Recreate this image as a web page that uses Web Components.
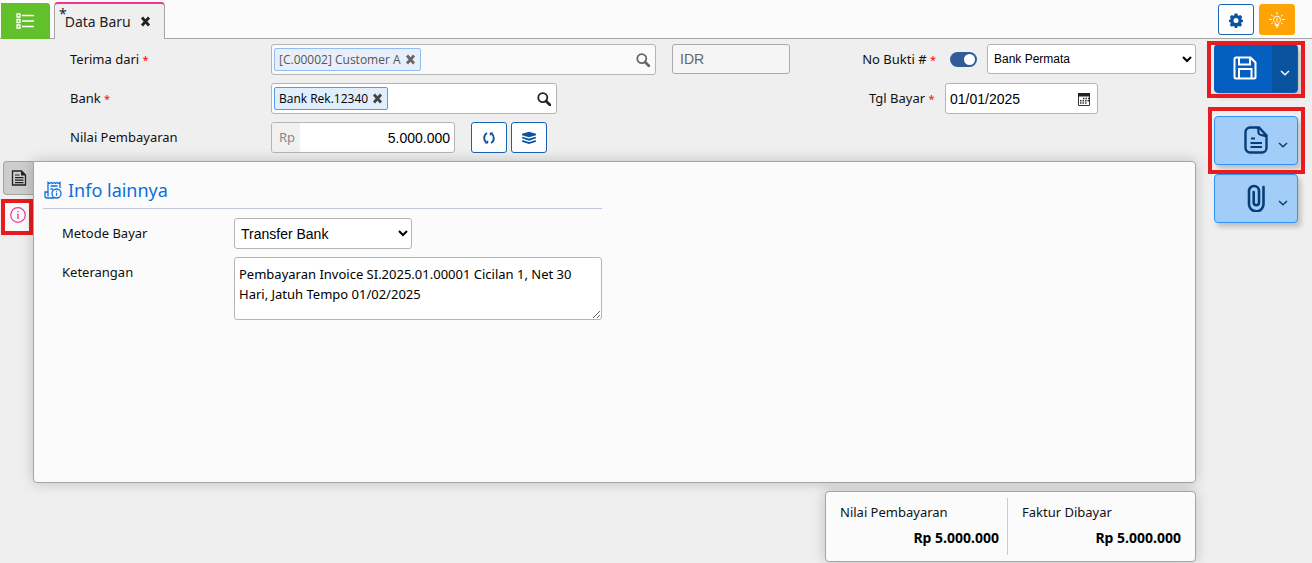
<!DOCTYPE html>
<html lang="id">
<head>
<meta charset="utf-8">
<meta name="viewport" content="width=device-width, initial-scale=1">
<title>Data Baru</title>
<style>
    body {
        margin: 0;
        font: 13px/20px "Noto Sans", "Open Sans", sans-serif;
        color: #111;
        background: #efefef;
    }
</style>
</head>
<body>
<payment-page></payment-page>

<script>
const ICONS = {
    list: ['0 0 18 16', '<path d="M1 1h3v3H1zM1 6.500h3v3H1zM1 12h3v3H1z" fill="none" stroke="currentColor" stroke-width="1.300"/><path d="M6 2.500h12M6 8h12M6 13.500h12" stroke="currentColor" stroke-width="1.700"/>'],
    close: ['0 0 11 11', '<path d="M2 1.500l7 8M9 1.500l-7 8" stroke="currentColor" stroke-width="2.800"/>'],
    search: ['0 0 14 14', '<circle cx="5.800" cy="5.600" r="4.500" fill="none" stroke="currentColor" stroke-width="1.800"/><path d="M9 9l4 4" stroke="currentColor" stroke-width="2.600" stroke-linecap="round"/>'],
    sync: ['0 0 14 14', '<path d="M5 2C1.400 4 1.400 9 4.200 11.300M9 12c3.600-2 3.600-7 .8-9.300" fill="none" stroke="currentColor" stroke-width="1.900"/><path d="M2.500 12.600h3.700V9zM11.500 1.400H7.800v3.700z" fill="currentColor"/>'],
    layers: ['0 0 16 14', '<path d="M8 .8l7 2v1.400L8 6.200 1 4.200V2.800z" fill="currentColor"/><path d="M1.200 6.500L8 8.700l6.800-2.200M1.200 9.800L8 12l6.800-2.200" fill="none" stroke="currentColor" stroke-width="1.800"/>'],
    calendar: ['0 0 14 14', '<path d="M1.500 1.500h11v12h-11z" fill="#fff" stroke="#333"/><path d="M1 1h12v3.500H1z" fill="#222"/><path d="M6 6.500h1.500M8.500 6.500H10M11 6.500h1M3 8.800h1.500M5.500 8.800H7M8 8.800h1.500M10.500 8.800H12M3 11h1.500M5.500 11H7M8 11h1.500" stroke="#333" stroke-width="1.500"/>'],
    gear: ['0 0 16 16', '<path fill="currentColor" fill-rule="evenodd" d="M6.700 1.500h2.600l.4 1.700 1 .5 1.700-.8 1.800 2-.9 1.500.3 1 1.400.5v1.900l-1.500.5-.4 1 .9 1.600-1.800 1.800-1.600-.8-1 .4-.4 1.700H6.700l-.4-1.700-1-.4-1.700.8-1.700-1.800.8-1.600-.4-1L.9 9.800V7.900l1.400-.5.4-1-.8-1.500 1.700-2 1.700.8 1-.5zM8 5.900a2.500 2.500 0 1 0 0 5 2.500 2.500 0 0 0 0-5z"/>'],
    bulb: ['0 0 16 16', '<path d="M6.300 12v-1.200C5 10 4.500 9 4.500 7.700a3.500 3.500 0 0 1 7 0c0 1.300-.5 2.300-1.800 3.100V12zM6.500 13.500h3M7.200 15h1.600M8 6.500v3.300M8 .5v1.800M2.300 3l1.300 1M13.700 3l-1.300 1M.8 7.500h1.700M15.200 7.500h-1.700M2.500 11.800l1.100-.8M13.500 11.800l-1.100-.8" fill="none" stroke="currentColor" stroke-linecap="round"/>'],
    save: ['0 0 24 24', '<path d="M3 1.500h14.500l5 5V21a1.500 1.500 0 0 1-1.500 1.500H3A1.500 1.500 0 0 1 1.500 21V3A1.500 1.500 0 0 1 3 1.500zM6 2v6.500h11V2M6 22v-9h12.500v9" fill="none" stroke="currentColor" stroke-width="2"/>'],
    doc: ['0 0 24 28', '<path d="M6 1.500h9l7.500 8V22a4.500 4.500 0 0 1-4.500 4.500H6A4.500 4.500 0 0 1 1.500 22V6A4.500 4.500 0 0 1 6 1.500z" fill="none" stroke="currentColor" stroke-width="2.400"/><path d="M13.500 1.500c2 2 0 5 1.500 6.500s4 .5 7.500 2.500M7 12.500h4M6.500 17h11.500M6.500 21h11.500" fill="none" stroke="currentColor" stroke-width="2.200"/>'],
    clip: ['0 0 20 28', '<path d="M17.500 3v16.500a7 7 0 0 1-14.500 1V7a5 5 0 0 1 10 0v12a2.700 2.700 0 0 1-5.300 0V8" fill="none" stroke="currentColor" stroke-width="2.600" stroke-linecap="round"/>'],
    chevron: ['0 0 10 6', '<path d="M1 1l4 3.700L9 1" fill="none" stroke="currentColor" stroke-width="1.500"/>'],
    file: ['0 0 16 16', '<path d="M1.500 1h9l4 4v10h-13z" fill="none" stroke="currentColor" stroke-width="1.300"/><path d="M10 .8V5.500h4.700z" fill="currentColor"/><path d="M4 5h4.500M4 7.700h8.500M4 10.200h8.500M4 12.600h8.500" stroke="currentColor" stroke-width="1.200"/>'],
    info: ['0 0 16 16', '<circle cx="8" cy="8" r="7.300" fill="none" stroke="currentColor" stroke-width="1.200"/><path d="M8 6.800v5.200M8 4v1.300" stroke="currentColor" stroke-width="1.400"/>'],
    receipt: ['0 0 18 18', '<path d="M4 11V1.500l1.500 1 1.500-1 1.500 1 1.500-1 1.500 1 1.500-1 1.500 1 1.500-1V7M4 11H1v4a2 2 0 0 0 2 2h7M4 11v4.500M6.500 5h7M6.500 8H9" fill="none" stroke="currentColor" stroke-width="1.300"/><circle cx="12.500" cy="12.500" r="4.500" fill="none" stroke="currentColor" stroke-width="1.300"/><path d="M12.500 11.800v3M12.500 9.800v1" stroke="currentColor" stroke-width="1.200"/>']
};

class UiIcon extends HTMLElement {
    connectedCallback() {
        const [box, shape] = ICONS[this.getAttribute('name')];
        const [, , w, h] = box.split(' ');
        this.attachShadow({ mode: 'open' }).innerHTML = `
            <style>
                :host { display: inline-flex; flex: none; }
                svg { display: block; }
            </style>
            <svg viewBox="${box}" width="${w}" height="${h}" aria-hidden="true">${shape}</svg>
        `;
    }
}
customElements.define('ui-icon', UiIcon);

// styles shared by every labelled control
const FIELD_CSS = `
    * { box-sizing: border-box; }
    :host { display: flex; align-items: flex-start; }
    label {
        flex: none;
        width: var(--label-width, auto);
        line-height: 31px;
        white-space: nowrap;
    }
    label span { color: red; font-size: 11px; }
    .box {
        display: flex;
        align-items: center;
        width: var(--field-width, 100%);
        height: 31px;
        background: #fff;
        border: 1px solid #b5b5b5;
        border-radius: 3px;
        overflow: hidden;
    }
    input {
        min-width: 0;
        flex: 1;
        border: 0;
        outline: 0;
        background: none;
        color: #000;
        font: 14px "Liberation Sans", Arial, sans-serif;
    }
    button {
        display: flex;
        padding: 0;
        border: 0;
        background: none;
        color: #222;
        cursor: pointer;
    }
`;

function labelHtml(el) {
    const text = el.getAttribute('label');
    if (!text) return '';
    return `<label for="control">${text}${el.hasAttribute('required') ? ' <span>*</span>' : ''}</label>`;
}

class LookupField extends HTMLElement {
    connectedCallback() {
        const off = this.hasAttribute('disabled') ? 'disabled' : '';
        this.attachShadow({ mode: 'open' }).innerHTML = `
            <style>
                ${FIELD_CSS}
                .box { padding: 0 5px 0 2px; }
                .chip {
                    display: flex;
                    align-items: center;
                    gap: 4px;
                    height: 23px;
                    padding: 0 4px;
                    border: 1px solid #4f9bf5;
                    border-radius: 2px;
                    background: #e1eefc;
                    color: #000;
                    font-family: "Open Sans", "Noto Sans", sans-serif;
                    font-size: 12px;
                    white-space: nowrap;
                }
                .chip button { color: #444; }
                :host([disabled]) .box { background: #fafafa; }
                :host([disabled]) .chip { border-color: #91bdf3; background: #e8effa; color: #555; }
                :host([disabled]) button { color: #666; }
            </style>
            ${labelHtml(this)}
            <div class="box">
                <span class="chip"><slot></slot><button type="button" aria-label="Hapus" ${off}><ui-icon name="close"></ui-icon></button></span>
                <input id="control" type="text" ${off}>
                <button type="button" aria-label="Cari" ${off}><ui-icon name="search"></ui-icon></button>
            </div>
        `;
    }
}
customElements.define('lookup-field', LookupField);

class TextField extends HTMLElement {
    connectedCallback() {
        const icon = this.getAttribute('icon');
        const prefix = this.getAttribute('prefix');
        const aria = this.getAttribute('aria');
        this.attachShadow({ mode: 'open' }).innerHTML = `
            <style>
                ${FIELD_CSS}
                input { height: 100%; padding: 0 4px; }
                .prefix {
                    align-self: stretch;
                    padding: 0 5px 0 7px;
                    line-height: 29px;
                    background: #f1f1f1;
                    color: #888;
                }
                .box > button { margin-right: 6px; }
                :host([numeric]) input { text-align: right; }
                :host([disabled]) .box { height: 30px; background: #f5f5f5; border-color: #aaa; }
                :host([disabled]) input { color: #666; padding: 0 7px; }
            </style>
            ${labelHtml(this)}
            <div class="box">
                ${prefix ? `<span class="prefix">${prefix}</span>` : ''}
                <input id="control" type="text" value="${this.getAttribute('value')}"
                    ${aria ? `aria-label="${aria}"` : ''} ${this.hasAttribute('disabled') ? 'disabled' : ''}>
                ${icon ? `<button type="button" aria-label="Pilih tanggal"><ui-icon name="${icon}"></ui-icon></button>` : ''}
            </div>
        `;
    }
}
customElements.define('text-field', TextField);

class SelectField extends HTMLElement {
    connectedCallback() {
        const aria = this.getAttribute('aria');
        this.attachShadow({ mode: 'open' }).innerHTML = `
            <style>
                ${FIELD_CSS}
                select {
                    width: var(--field-width, 100%);
                    height: 31px;
                    padding: 0 7px 0 2px;
                    border: 1px solid #b5b5b5;
                    border-radius: 3px;
                    background: #fff;
                    color: #000;
                    font: 14px "Liberation Sans", Arial, sans-serif;
                }
                :host([small]) select { font-size: 12px; height: 30px; }
            </style>
            ${labelHtml(this)}
            <select id="control" ${aria ? `aria-label="${aria}"` : ''}><option>${this.getAttribute('value')}</option></select>
        `;
    }
}
customElements.define('select-field', SelectField);

class NoteField extends HTMLElement {
    connectedCallback() {
        this.attachShadow({ mode: 'open' }).innerHTML = `
            <style>
                ${FIELD_CSS}
                textarea {
                    width: var(--field-width, 100%);
                    height: 63px;
                    padding: 6px 4px;
                    border: 1px solid #b5b5b5;
                    border-radius: 3px;
                    background: #fff;
                    color: #000;
                    font: inherit;
                }
            </style>
            ${labelHtml(this)}
            <textarea id="control">${this.textContent.trim()}</textarea>
        `;
    }
}
customElements.define('note-field', NoteField);

class ToggleSwitch extends HTMLElement {
    connectedCallback() {
        this.attachShadow({ mode: 'open' }).innerHTML = `
            <style>
                ${FIELD_CSS}
                :host { align-items: center; gap: 14px; }
                input {
                    appearance: none;
                    display: flex;
                    flex: none;
                    align-items: center;
                    justify-content: flex-end;
                    width: 27px;
                    height: 15px;
                    margin: 0;
                    padding: 2px;
                    border-radius: 8px;
                    background: #315c98;
                }
                input::before {
                    content: "";
                    width: 11px;
                    height: 11px;
                    border-radius: 50%;
                    background: #fff;
                }
                input:not(:checked) { justify-content: flex-start; background: #aaa; }
            </style>
            ${labelHtml(this)}
            <input id="control" type="checkbox" role="switch" checked>
        `;
    }
}
customElements.define('toggle-switch', ToggleSwitch);

class IconButton extends HTMLElement {
    connectedCallback() {
        this.attachShadow({ mode: 'open' }).innerHTML = `
            <style>
                :host { display: block; }
                button {
                    display: flex;
                    align-items: center;
                    justify-content: center;
                    box-sizing: border-box;
                    width: 36px;
                    height: 31px;
                    padding: 0;
                    border: 1px solid #1763b5;
                    border-radius: 3px;
                    background: #fff;
                    color: #0b539f;
                }
                :host([tone=amber]) button { border-color: #ffa406; background: #ffa406; color: #fff; }
            </style>
            <button type="button" aria-label="${this.getAttribute('title-text')}"><ui-icon name="${this.getAttribute('icon')}"></ui-icon></button>
        `;
    }
}
customElements.define('icon-button', IconButton);

class ActionButton extends HTMLElement {
    connectedCallback() {
        const name = this.getAttribute('title-text');
        this.attachShadow({ mode: 'open' }).innerHTML = `
            <style>
                :host {
                    position: relative;
                    display: flex;
                    box-sizing: border-box;
                    height: 49px;
                    border: 1px solid #2e92fb;
                    border-radius: 4px;
                    background: #a3cdf9;
                    color: #073e78;
                    box-shadow: 3px 4px 5px rgba(0, 0, 0, .2);
                }
                button {
                    display: flex;
                    align-items: center;
                    justify-content: center;
                    padding: 0;
                    border: 0;
                    background: none;
                    color: inherit;
                }
                .main { flex: 1; padding: 0 0 2px 28px; }
                .more { width: 28px; padding-top: 9px; }
                :host([primary]) { border-color: #0660bd; background: #055fc0; color: #fff; }
                :host([primary]) .main { padding-left: 2px; }
                :host([primary]) .more { width: 25px; border-radius: 0 3px 3px 0; background: #09529d; }
                /* red marker frame round the button */
                :host([marked]) { z-index: 1; }
                :host([marked])::after {
                    content: "";
                    position: absolute;
                    inset: var(--mark-inset, -10px -8px -10px -7px);
                    border: 4px solid #e81b1e;
                    pointer-events: none;
                }
            </style>
            <button class="main" type="button" aria-label="${name}"><ui-icon name="${this.getAttribute('icon')}"></ui-icon></button>
            <button class="more" type="button" aria-label="${name}, pilihan lain"><ui-icon name="chevron"></ui-icon></button>
        `;
    }
}
customElements.define('action-button', ActionButton);

class TabBar extends HTMLElement {
    connectedCallback() {
        this.attachShadow({ mode: 'open' }).innerHTML = `
            <style>
                :host {
                    display: flex;
                    align-items: flex-end;
                    box-sizing: border-box;
                    height: 39px;
                    padding: 0 17px 0 1px;
                    border-bottom: 1px solid #a5a5a5;
                    background: #fbfbfb;
                }
                button { padding: 0; border: 0; background: none; color: inherit; }
                .list {
                    display: flex;
                    align-items: center;
                    justify-content: center;
                    width: 49px;
                    height: 36px;
                    margin-bottom: -1px;
                    padding-right: 2px;
                    border-radius: 0 3px 0 0;
                    background: #62c02b;
                    color: #fff;
                }
                .tab {
                    display: flex;
                    align-items: center;
                    gap: 9px;
                    box-sizing: border-box;
                    height: 37px;
                    margin: 0 auto -1px 4px;
                    padding: 0 13px 0 4px;
                    border: solid #a5a5a5;
                    border-width: 0 1px;
                    border-top: 2px solid #ef3797;
                    border-radius: 4px 4px 0 0;
                    background: #efefef;
                    color: #222;
                    font-size: 14px;
                }
                .tab sup { align-self: flex-start; margin-right: -11px; font-size: 14px; line-height: 20px; }
                .tab button { display: flex; }
                .tools { display: flex; gap: 5px; align-self: flex-start; padding-top: 4px; }
            </style>
            <button class="list" type="button" aria-label="Daftar"><ui-icon name="list"></ui-icon></button>
            <div class="tab"><sup>*</sup><slot></slot><button type="button" aria-label="Tutup"><ui-icon name="close"></ui-icon></button></div>
            <div class="tools">
                <icon-button icon="gear" title-text="Pengaturan"></icon-button>
                <icon-button icon="bulb" title-text="Bantuan" tone="amber"></icon-button>
            </div>
        `;
    }
}
customElements.define('tab-bar', TabBar);

class SideTabs extends HTMLElement {
    connectedCallback() {
        this.attachShadow({ mode: 'open' }).innerHTML = `
            <style>
                :host { display: flex; flex-direction: column; gap: 4px; width: 32px; }
                button {
                    display: flex;
                    align-items: center;
                    justify-content: center;
                    box-sizing: border-box;
                    padding: 0;
                }
                .page {
                    height: 34px;
                    margin-left: 2px;
                    border: 1px solid #a5a5a5;
                    border-right: 0;
                    border-radius: 4px 0 0 4px;
                    background: #cdcdcd;
                    color: #222;
                }
                .info {
                    height: 36px;
                    padding: 0 0 4px 2px;
                    border: 4px solid #e81b1e;
                    background: #fbfbfb;
                    color: #e83a97;
                }
            </style>
            <button class="page" type="button" aria-label="Faktur"><ui-icon name="file"></ui-icon></button>
            <button class="info" type="button" aria-label="Info lainnya"><ui-icon name="info"></ui-icon></button>
        `;
    }
}
customElements.define('side-tabs', SideTabs);

class InfoPanel extends HTMLElement {
    connectedCallback() {
        this.attachShadow({ mode: 'open' }).innerHTML = `
            <style>
                :host {
                    display: block;
                    box-sizing: border-box;
                    padding: 14px 9px;
                    border: 1px solid #a5a5a5;
                    border-radius: 0 4px 4px 4px;
                    background: #fbfbfb;
                    box-shadow: 0 0 14px rgba(0, 0, 0, .2);
                }
                section { max-width: 559px; }
                h2 {
                    display: flex;
                    align-items: center;
                    gap: 6px;
                    margin: 0 0 9px;
                    padding: 0 0 4px 1px;
                    border-bottom: 1px solid #c0c9dc;
                    color: #0b6fdc;
                    font-size: 18px;
                    font-weight: 400;
                    line-height: 28px;
                }
                .fields { display: flex; flex-direction: column; gap: 8px; padding-left: 19px; }
            </style>
            <section>
                <h2><ui-icon name="receipt"></ui-icon>${this.getAttribute('heading')}</h2>
                <div class="fields"><slot></slot></div>
            </section>
        `;
    }
}
customElements.define('info-panel', InfoPanel);

class PaymentSummary extends HTMLElement {
    connectedCallback() {
        this.attachShadow({ mode: 'open' }).innerHTML = `
            <style>
                :host {
                    display: flex;
                    box-sizing: border-box;
                    padding: 6px 0;
                    border: 1px solid #a5a5a5;
                    border-radius: 4px;
                    background: #fbfbfb;
                    box-shadow: 0 0 14px rgba(0, 0, 0, .2);
                }
                dl { flex: 1; margin: 0; padding: 4px 14px 7px; }
                dl:first-of-type { padding-right: 8px; border-right: 1px solid #ccc; }
                dt, dd { margin: 0; line-height: 20px; }
                dd { margin-top: 6px; color: #000; font-size: 14px; font-weight: 700; text-align: right; }
            </style>
            <dl><dt>Nilai Pembayaran</dt><dd>Rp 5.000.000</dd></dl>
            <dl><dt>Faktur Dibayar</dt><dd>Rp 5.000.000</dd></dl>
        `;
    }
}
customElements.define('payment-summary', PaymentSummary);

class PaymentPage extends HTMLElement {
    constructor() {
        super();
        this.attachShadow({ mode: 'open' });
        this.shadowRoot.innerHTML = `
            <style>
                :host { display: flex; flex-direction: column; min-height: 100vh; }
                .body { flex: 1; display: flex; gap: 18px; padding: 5px 14px 1px 1px; }
                main { flex: 1; display: flex; flex-direction: column; gap: 8px; min-width: 0; }
                .head {
                    display: flex;
                    justify-content: space-between;
                    gap: 24px;
                    padding-left: 69px;
                }
                .left { display: flex; flex-direction: column; gap: 8px; --label-width: 201px; }
                .right { display: flex; flex-direction: column; gap: 8px; }
                .row { display: flex; gap: 16px; }
                .row.end { height: 31px; gap: 10px; align-items: flex-start; justify-content: flex-end; }
                .row.end toggle-switch { height: 30px; }
                .pair { display: flex; gap: 4px; }
                .customer { --field-width: 385px; }
                .currency { --field-width: 118px; --label-width: 0; }
                .bank { --field-width: 286px; }
                .amount { --field-width: 184px; }
                .number { --field-width: 209px; }
                .date { --field-width: 153px; --label-width: 76px; margin-right: 98px; }
                .content { flex: 1; display: flex; }
                info-panel { flex: 1; --label-width: 172px; }
                .method { --field-width: 178px; }
                .note { --field-width: 368px; }
                payment-summary { align-self: flex-end; width: 371px; }
                aside { width: 84px; }
                aside action-button + action-button { margin-top: 9px; }
                aside .save + action-button { margin-top: 23px; }
                .save { --mark-inset: -4px -8px -6px; }
            </style>
            <tab-bar>Data Baru</tab-bar>
            <div class="body">
                <main>
                    <div class="head">
                        <div class="left">
                            <div class="row">
                                <lookup-field class="customer" label="Terima dari" required disabled>[C.00002] Customer A</lookup-field>
                                <text-field class="currency" value="IDR" aria="Mata uang" disabled></text-field>
                            </div>
                            <lookup-field class="bank" label="Bank" required>Bank Rek.12340</lookup-field>
                            <div class="row">
                                <text-field class="amount" label="Nilai Pembayaran" prefix="Rp" value="5.000.000" numeric></text-field>
                                <div class="pair">
                                    <icon-button icon="sync" title-text="Muat ulang"></icon-button>
                                    <icon-button icon="layers" title-text="Rincian"></icon-button>
                                </div>
                            </div>
                        </div>
                        <div class="right">
                            <div class="row end">
                                <toggle-switch label="No Bukti #" required></toggle-switch>
                                <select-field class="number" value="Bank Permata" aria="No Bukti" small></select-field>
                            </div>
                            <div class="row end">
                                <text-field class="date" label="Tgl Bayar" required value="01/01/2025" icon="calendar"></text-field>
                            </div>
                        </div>
                    </div>
                    <div class="content">
                        <side-tabs></side-tabs>
                        <info-panel heading="Info lainnya">
                            <select-field class="method" label="Metode Bayar" value="Transfer Bank"></select-field>
                            <note-field class="note" label="Keterangan">Pembayaran Invoice SI.2025.01.00001 Cicilan 1, Net 30 Hari, Jatuh Tempo 01/02/2025</note-field>
                        </info-panel>
                    </div>
                    <payment-summary></payment-summary>
                </main>
                <aside>
                    <action-button class="save" icon="save" title-text="Simpan" primary marked></action-button>
                    <action-button icon="doc" title-text="Dokumen" marked></action-button>
                    <action-button icon="clip" title-text="Lampiran"></action-button>
                </aside>
            </div>
        `;
    }
}
customElements.define('payment-page', PaymentPage);
</script>
</body>
</html>
